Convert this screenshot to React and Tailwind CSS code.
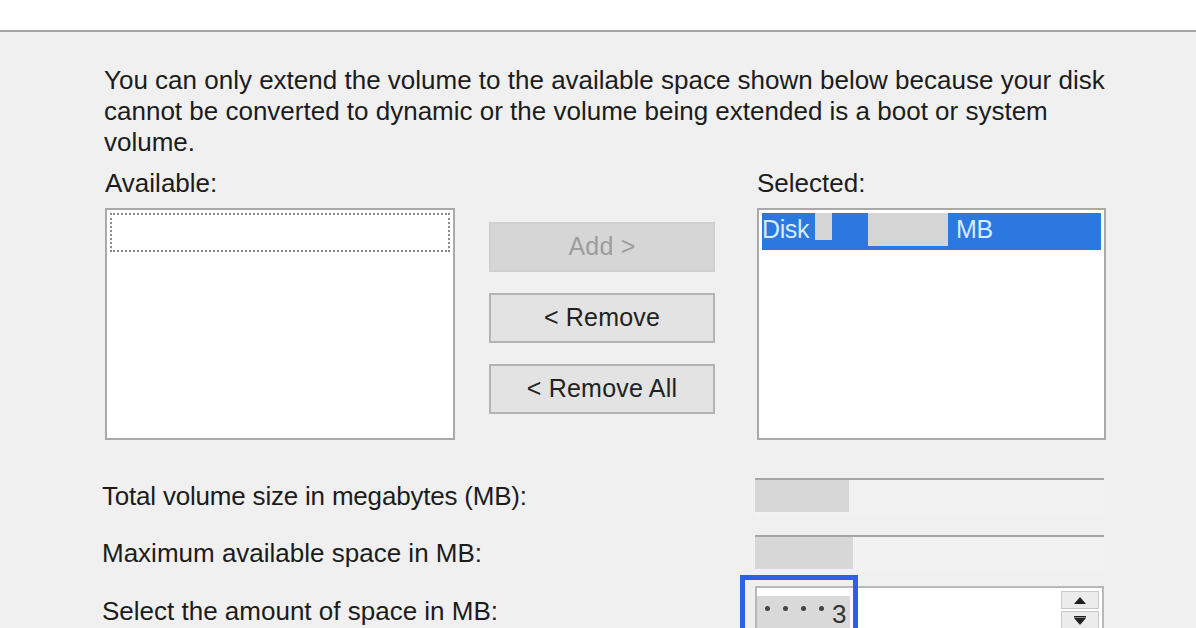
import React from 'react';

const font = { fontFamily: '"Liberation Sans", Arial, sans-serif' };

const ListBox = ({ children, width }) => (
  <div className="h-[232px] border-2 border-[#a9a9a9] bg-white p-[3px]" style={{ width }}>
    {children}
  </div>
);

const WinButton = ({ label, disabled }) => (
  <button
    className={
      disabled
        ? 'h-[50px] w-[226px] border-2 border-[#cfcfcf] bg-[#d6d6d6] text-[25px] tracking-[0.2px] text-[#9d9d9d]'
        : 'h-[50px] w-[226px] border-2 border-[#b4b4b4] bg-[#e3e3e3] text-[25px] tracking-[0.2px] text-[#222]'
    }
  >
    {label}
  </button>
);

const ReadOnlyField = ({ block }) => (
  <div className="flex h-[37px] w-[349px] border-t-2 border-[#a6a6a6] bg-[#f2f2f2] pb-[3px]">
    <div className="h-full bg-[#d7d7d7]" style={{ width: block }} />
  </div>
);

export default function App() {
  return (
    <div className="h-[628px] w-[1196px] overflow-hidden bg-[#f0f0f0] text-[#1c1c1c]" style={font}>
      <div className="h-[32px] border-b-2 border-[#a3a3a3] bg-white" />

      <div className="pl-[104px] pt-[33px]">
        <p className="text-[26px] leading-[31px] whitespace-nowrap">
          You can only extend the volume to the available space shown below because your disk
          <br />
          cannot be converted to dynamic or the volume being extended is a boot or system
          <br />
          volume.
        </p>

        <div className="mt-[10px] flex pl-[1px]">
          <div>
            <div className="mb-[9px] text-[26px] leading-[31px]">Available:</div>
            <ListBox width={350}>
              <div className="h-[39px] border-2 border-dotted border-[#8a8a8a]" />
            </ListBox>
          </div>

          <div className="ml-[34px] flex flex-col gap-[21px] pt-[54px]">
            <WinButton label="Add >" disabled />
            <WinButton label="< Remove" />
            <WinButton label="< Remove All" />
          </div>

          <div className="ml-[42px]">
            <div className="mb-[9px] text-[26px] leading-[31px]">Selected:</div>
            <ListBox width={349}>
              <div className="flex h-[37px] items-start bg-[#2a78e0] text-[25px] tracking-[-0.4px] text-[#d6ecff]">
                <span className="leading-[32px]">Disk</span>
                <span className="ml-[6px] h-[27px] w-[17px] bg-[#d5d5d5]" />
                <span className="ml-[36px] h-[33px] w-[80px] bg-[#d5d5d5]" />
                <span className="ml-[8px] leading-[32px]">MB</span>
              </div>
            </ListBox>
          </div>
        </div>

        <div className="mt-[38px] flex w-[1002px] flex-col -ml-[2px]">
          <div className="flex h-[37px] items-center justify-between">
            <span className="text-[26px] tracking-[-0.2px]">Total volume size in megabytes (MB):</span>
            <ReadOnlyField block={94} />
          </div>
          <div className="mt-[20px] flex h-[37px] items-center justify-between">
            <span className="text-[26px]">Maximum available space in MB:</span>
            <ReadOnlyField block={98} />
          </div>
          <div className="mt-[14px] flex items-start justify-between">
            <span className="mt-[6px] text-[26px]">Select the amount of space in MB:</span>
            <div className="relative flex h-[50px] w-[349px] border-2 border-b-0 border-[#b8b8b8] bg-white">
              <div className="mt-[8px] flex h-[34px] w-[93px] items-start bg-[#d9d9d9] pl-[8px] text-[#333]">
                <span className="mt-[10px] flex gap-[13px]">
                  <span className="h-[5px] w-[5px] rounded-full bg-[#444]" />
                  <span className="h-[5px] w-[5px] rounded-full bg-[#444]" />
                  <span className="h-[5px] w-[5px] rounded-full bg-[#444]" />
                  <span className="h-[5px] w-[5px] rounded-full bg-[#444]" />
                </span>
                <span className="ml-[8px] mt-[8px] text-[26px] leading-[20px]">3</span>
              </div>
              <div className="ml-auto mr-[3px] mt-[3px] flex w-[38px] flex-col gap-[2px]">
                <div className="flex h-[18px] items-center justify-center border border-[#c8c8c8] bg-[#ececec]">
                  <svg width="12" height="7" viewBox="0 0 12 7"><path d="M6 0 L12 7 L0 7 Z" fill="#222" /></svg>
                </div>
                <div className="flex h-[18px] items-center justify-center border border-[#c8c8c8] bg-[#ececec]">
                  <svg width="12" height="9" viewBox="0 0 12 9"><path d="M0 0 H12 V1.5 H0 Z M0 2 L12 2 L6 9 Z" fill="#222" /></svg>
                </div>
              </div>
              <div className="absolute left-[-17px] top-[-13px] h-[80px] w-[118px] border-[5px] border-[#2f5fe6]" />
            </div>
          </div>
        </div>
      </div>
    </div>
  );
}
